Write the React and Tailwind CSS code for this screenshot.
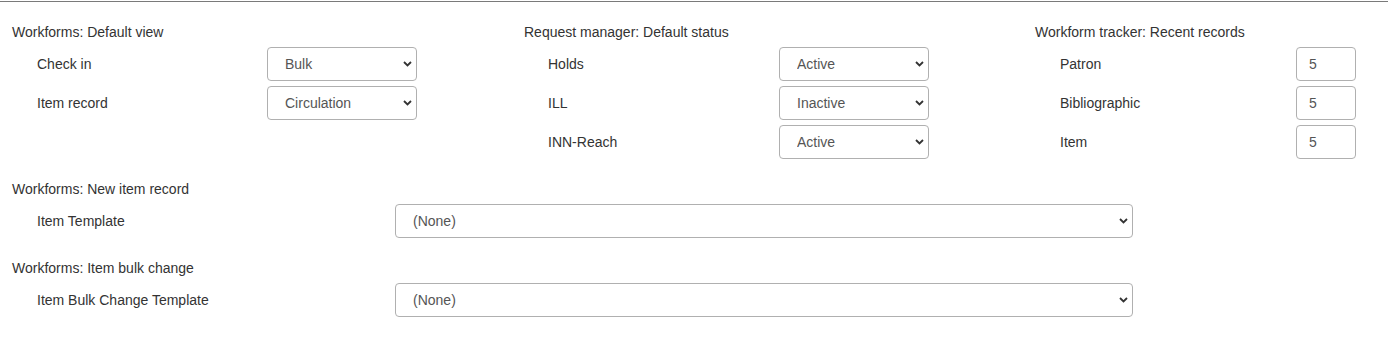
const font = { fontFamily: '"Liberation Sans", Arial, sans-serif' }

function Chevron() {
  return (
    <svg width="9" height="6" viewBox="0 0 9 6" className="pointer-events-none absolute right-[5px] top-1/2 -translate-y-1/2">
      <path d="M1 1l3.5 3.5L8 1" fill="none" stroke="#333" strokeWidth="1.8" />
    </svg>
  )
}

function Select({ value, options, width }) {
  return (
    <div className={`relative ${width}`}>
      <select
        defaultValue={value}
        className="h-[34px] w-full appearance-none rounded-[4px] border border-[#b0b0b0] bg-white pl-[17px] pr-6 text-[14px] text-[#555] outline-none"
      >
        {options.map((o) => (
          <option key={o}>{o}</option>
        ))}
      </select>
      <Chevron />
    </div>
  )
}

function NumberBox({ value }) {
  return (
    <input
      defaultValue={value}
      className="h-[34px] w-[60px] rounded-[4px] border border-[#b0b0b0] bg-white pl-[12px] text-[14px] text-[#555] outline-none"
    />
  )
}

function Row({ label, labelWidth, indent = 'pl-[25px]', children }) {
  return (
    <div className={`flex items-center ${indent}`}>
      <div className={`${labelWidth} pt-px`}>{label}</div>
      {children}
    </div>
  )
}

export default function App() {
  const status = ['Active', 'Inactive']

  return (
    <div className="min-h-[346px] bg-white text-[14px] text-[#333]" style={font}>
      <div className="mt-px border-t border-[#7a7a7a]" />

      <div className="pl-[12px] pt-[20px]">
        <div className="flex">
          <div className="w-[512px]">
            <div className="mb-[5px] leading-5">Workforms: Default view</div>
            <div className="flex flex-col gap-[5px]">
              <Row label="Check in" labelWidth="w-[230px]">
                <Select value="Bulk" options={['Bulk', 'Single']} width="w-[150px]" />
              </Row>
              <Row label="Item record" labelWidth="w-[230px]">
                <Select value="Circulation" options={['Circulation', 'Catalog']} width="w-[150px]" />
              </Row>
            </div>
          </div>

          <div className="w-[511px]">
            <div className="mb-[5px] leading-5">Request manager: Default status</div>
            <div className="flex flex-col gap-[5px]">
              <Row label="Holds" labelWidth="w-[231px]" indent="pl-[24px]">
                <Select value="Active" options={status} width="w-[150px]" />
              </Row>
              <Row label="ILL" labelWidth="w-[231px]" indent="pl-[24px]">
                <Select value="Inactive" options={status} width="w-[150px]" />
              </Row>
              <Row label="INN-Reach" labelWidth="w-[231px]" indent="pl-[24px]">
                <Select value="Active" options={status} width="w-[150px]" />
              </Row>
            </div>
          </div>

          <div className="w-[340px]">
            <div className="mb-[5px] leading-5">Workform tracker: Recent records</div>
            <div className="flex flex-col gap-[5px]">
              <Row label="Patron" labelWidth="w-[236px]">
                <NumberBox value="5" />
              </Row>
              <Row label="Bibliographic" labelWidth="w-[236px]">
                <NumberBox value="5" />
              </Row>
              <Row label="Item" labelWidth="w-[236px]">
                <NumberBox value="5" />
              </Row>
            </div>
          </div>
        </div>

        <div className="mt-[20px]">
          <div className="mb-[5px] leading-5">Workforms: New item record</div>
          <Row label="Item Template" labelWidth="w-[358px]">
            <Select value="(None)" options={['(None)']} width="w-[738px]" />
          </Row>
        </div>

        <div className="mt-[20px]">
          <div className="mb-[5px] leading-5">Workforms: Item bulk change</div>
          <Row label="Item Bulk Change Template" labelWidth="w-[358px]">
            <Select value="(None)" options={['(None)']} width="w-[738px]" />
          </Row>
        </div>
      </div>
    </div>
  )
}
